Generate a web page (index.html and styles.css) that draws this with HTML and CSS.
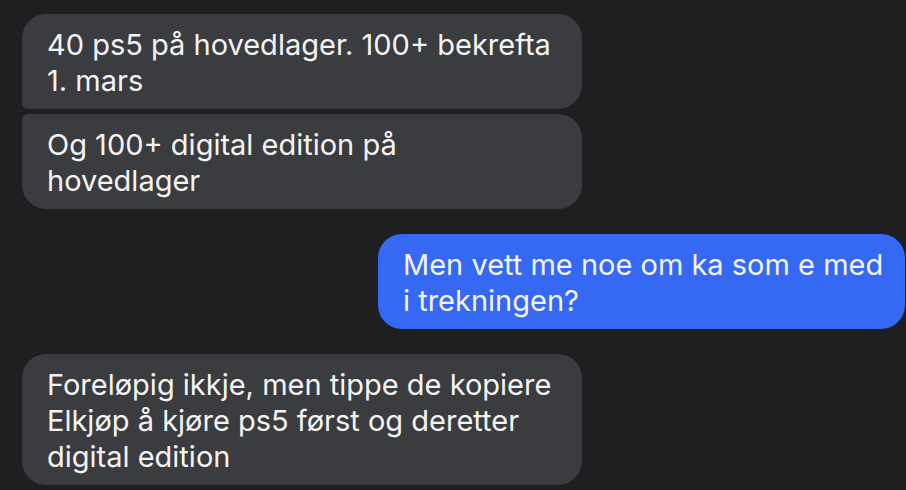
FILE: index.html
```html
<!DOCTYPE html>
<html lang="no">
<head>
<meta charset="utf-8">
<title>Meldinger</title>
<link rel="stylesheet" href="styles.css">
</head>
<body>
<main class="thread">
  <div class="group incoming">
    <div class="bubble in first">40 ps5 på hovedlager. 100+ bekrefta<br>1. mars</div>
    <div class="bubble in last">Og 100+ digital edition på<br>hovedlager</div>
  </div>
  <div class="group outgoing">
    <div class="bubble out">Men vett me noe om ka som e med<br>i trekningen?</div>
  </div>
  <div class="group incoming">
    <div class="bubble in">Foreløpig ikkje, men tippe de kopiere<br>Elkjøp å kjøre ps5 først og deretter<br>digital edition</div>
  </div>
</main>
</body>
</html>
```
FILE: styles.css
```css
html, body {
  margin: 0;
  padding: 0;
  background: #1e1f21;
  width: 906px;
  height: 490px;
  overflow: hidden;
}
.thread {
  display: flex;
  flex-direction: column;
  gap: 25px;
  padding: 14px 1px 0 22px;
  font-family: Inter, "Noto Sans", sans-serif;
  font-size: 29px;
  line-height: 36px;
  color: #f4f4f5;
  -webkit-font-smoothing: antialiased;
}
.group {
  display: flex;
  flex-direction: column;
  gap: 5px;
}
.incoming { align-items: flex-start; }
.outgoing { align-items: flex-end; }
.bubble {
  box-sizing: border-box;
  padding: 13px 20px 10px 25px;
  border-radius: 24px;
  white-space: nowrap;
}
.in {
  width: 560px;
  background: #3b3c3f;
}
.in.first { border-bottom-left-radius: 6px; }
.in.last { border-top-left-radius: 6px; }
.out {
  width: 527px;
  background: #3568f3;
}
```
